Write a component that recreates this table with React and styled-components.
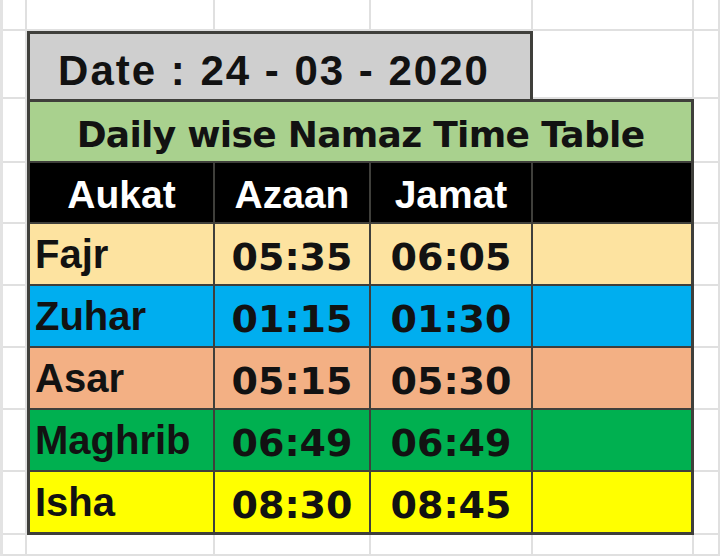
import React from 'react';
import styled, { createGlobalStyle } from 'styled-components';

const GlobalStyle = createGlobalStyle`
  html, body {
    margin: 0;
    padding: 0;
    background: #ffffff;
  }
  body {
    font-family: "DejaVu Sans", "Liberation Sans", sans-serif;
    overflow: hidden;
  }
`;

const LINE = '#3f3f3b';
const WIDE = '"DejaVu Sans", "Liberation Sans", sans-serif';
const NARROW = '"Liberation Sans", Arial, sans-serif';

const Sheet = styled.div`
  display: grid;
  grid-template-columns: 24px 188px 156px 162px 161px 1fr;
  grid-template-rows: 31px 68px 64px 61px repeat(4, 62px) 63px 1fr;
  width: 720px;
  height: 556px;
  box-sizing: border-box;
  border-left: 3px solid #e3e3e3;
  background: #ffffff;
`;

const Blank = styled.div`
  grid-column: span ${({ $span }) => $span || 1};
  border-right: 2px solid #e0e0e0;
  border-bottom: 2px solid #e0e0e0;
`;

const Cell = styled.div`
  grid-column: span ${({ $span }) => $span || 1};
  display: flex;
  align-items: center;
  justify-content: ${({ $align }) => ($align === 'left' ? 'flex-start' : 'center')};
  box-sizing: border-box;
  padding-left: ${({ $align }) => ($align === 'left' ? '5px' : '0')};
  padding-top: ${({ $shift }) => $shift || 0}px;
  background: ${({ $bg }) => $bg};
  color: ${({ $color }) => $color || '#121212'};
  font-family: ${({ $wide }) => ($wide ? WIDE : NARROW)};
  font-weight: 700;
  font-size: ${({ $size }) => $size}px;
  line-height: 1;
  white-space: nowrap;
  border-right: ${({ $outerRight }) => ($outerRight ? 3 : 2)}px solid ${LINE};
  border-bottom: ${({ $outerBottom }) => ($outerBottom ? 3 : 2)}px solid ${LINE};
  border-left: ${({ $outerLeft }) => ($outerLeft ? `3px solid ${LINE}` : 'none')};
`;

const DateCell = styled(Cell)`
  border-top: 3px solid ${LINE};
  border-bottom: none;
  padding-right: 12px;
  letter-spacing: 2px;
`;

const TitleCell = styled(Cell)`
  border-top: 3px solid ${LINE};
  letter-spacing: -0.7px;
`;

const prayers = [
  { name: 'Fajr', azaan: '05:35', jamat: '06:05', bg: '#fde3a0' },
  { name: 'Zuhar', azaan: '01:15', jamat: '01:30', bg: '#00aeef' },
  { name: 'Asar', azaan: '05:15', jamat: '05:30', bg: '#f3b084' },
  { name: 'Maghrib', azaan: '06:49', jamat: '06:49', bg: '#00b050' },
  { name: 'Isha', azaan: '08:30', jamat: '08:45', bg: '#ffff00' },
];

const headers = ['Aukat', 'Azaan', 'Jamat', ''];

export default function App() {
  return (
    <>
      <GlobalStyle />
      <Sheet>
        {Array.from({ length: 6 }).map((_, i) => (
          <Blank key={`top-${i}`} />
        ))}

        <Blank />
        <DateCell $span={3} $bg="#cfcfcf" $size={42} $shift={8} $outerLeft $outerRight>
          Date : 24 - 03 - 2020
        </DateCell>
        <Blank />
        <Blank />

        <Blank />
        <TitleCell $span={4} $bg="#a9d18e" $size={36} $wide $shift={7} $outerLeft $outerRight>
          Daily wise Namaz Time Table
        </TitleCell>
        <Blank />

        <Blank />
        {headers.map((h, i) => (
          <Cell
            key={`h-${i}`}
            $bg="#000000"
            $color="#ffffff"
            $size={39}
            $shift={4}
            $outerLeft={i === 0}
            $outerRight={i === 3}
          >
            {h}
          </Cell>
        ))}
        <Blank />

        {prayers.map((p, r) => {
          const last = r === prayers.length - 1;
          return (
            <React.Fragment key={p.name}>
              <Blank />
              <Cell $bg={p.bg} $size={40} $align="left" $outerLeft $outerBottom={last}>
                {p.name}
              </Cell>
              <Cell $bg={p.bg} $size={38} $wide $shift={6} $outerBottom={last}>
                {p.azaan}
              </Cell>
              <Cell $bg={p.bg} $size={38} $wide $shift={6} $outerBottom={last}>
                {p.jamat}
              </Cell>
              <Cell $bg={p.bg} $size={38} $outerRight $outerBottom={last} />
              <Blank />
            </React.Fragment>
          );
        })}

        {Array.from({ length: 6 }).map((_, i) => (
          <Blank key={`bottom-${i}`} />
        ))}
      </Sheet>
    </>
  );
}
